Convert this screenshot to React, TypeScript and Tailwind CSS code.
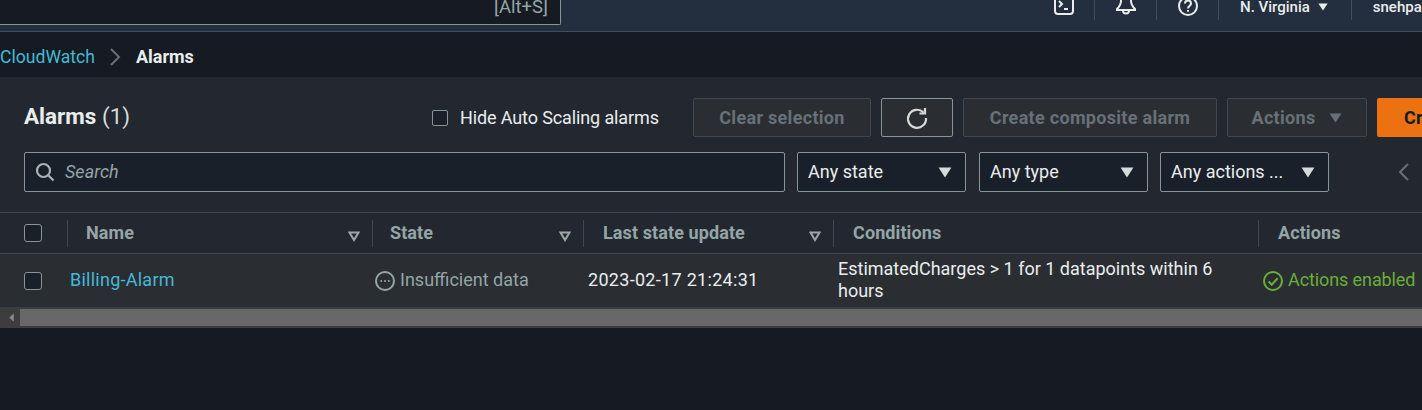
import React from "react";

const Caret = ({ className }: { className: string }) => (
  <svg viewBox="0 0 12 10" className={className} fill="currentColor" preserveAspectRatio="none">
    <path d="M0.5 0.5h11L6 9.500z" />
  </svg>
);

const SortIcon = () => (
  <svg viewBox="0 0 12 11" className="h-[11px] w-[12px] shrink-0 text-[#9ba7a6]" fill="none" stroke="currentColor" strokeWidth="2">
    <path d="M1.500 1.500h9L6 9z" />
  </svg>
);

const Checkbox = () => (
  <span className="block h-[18px] w-[18px] rounded-[3px] border border-[#879596] bg-[#1a2029]" />
);

const HeaderCell = ({ label, width, sort, inset }: { label: string; width: string; sort?: boolean; inset: string }) => (
  <div className={`${width} ${inset} flex h-[27px] shrink-0 items-center justify-between border-l border-[#414750] pr-[12px] tracking-[0.1px] whitespace-nowrap`}>
    <span>{label}</span>
    {sort && <span className="mt-[6px]"><SortIcon /></span>}
  </div>
);

const App = () => {
  return (
    <div className="h-[410px] w-[1422px] overflow-hidden bg-[#161a22] font-['Roboto',sans-serif] text-[18px] leading-[26px] text-[#d5dbdb]">
      <nav className="flex h-[32px] items-start overflow-hidden border-b border-[#414d5c] bg-[#232f3e] text-[15px] text-[#eaeded]">
        <div className="flex h-[25px] w-[561px] shrink-0 items-end justify-end rounded-br-[2px] border-r border-b border-[#879596] bg-[#161a22] pr-[12px] pb-[7px] text-[18.500px] leading-[20px] text-[#95a5a6]">
          [Alt+S]
        </div>
        <div className="ml-[493px] flex h-[20px] shrink-0 items-end">
          <svg viewBox="0 0 20 20" className="h-[20px] w-[20px] -translate-y-[5px]" fill="none" stroke="currentColor" strokeWidth="2">
            <rect x="1" y="-4" width="18" height="23" rx="3" />
            <path d="M5 6l3 3-3 3M10 14h4" />
          </svg>
          <span className="ml-[20px] h-[20px] border-l border-[#414d5c]" />
          <svg viewBox="0 0 20 20" className="ml-[21px] h-[20px] w-[20px] -translate-y-[3px]" fill="none" stroke="currentColor" strokeWidth="2">
            <path d="M5 -2v6c0 4-2 6-4 8v1h18v-1c-2-2-4-4-4-8v-6M7 13.500a3 3 0 0 0 6 0" />
          </svg>
          <span className="ml-[20px] h-[20px] border-l border-[#414d5c]" />
          <svg viewBox="0 0 20 20" className="ml-[21px] h-[20px] w-[20px] -translate-y-[4px]" fill="none" stroke="currentColor" strokeWidth="2">
            <circle cx="10" cy="10" r="9" />
            <path d="M7 7.500c0-4 6-4 6 0 0 2.500-3 2.500-3 5" />
            <path d="M10 14v1.800" />
          </svg>
          <span className="ml-[20px] h-[20px] border-l border-[#414d5c]" />
        </div>
        <div className="ml-[21px] flex h-[14px] shrink-0 items-center whitespace-nowrap leading-[14px] font-medium">
          <span>N. Virginia</span>
          <Caret className="ml-[8px] h-[8px] w-[10px] text-[#eaeded]" />
        </div>
        <span className="ml-[23px] h-[20px] shrink-0 border-l border-[#414d5c]" />
        <span className="ml-[21px] h-[14px] shrink-0 leading-[14px] font-medium">snehpa</span>
      </nav>

      <div className="flex h-[45px] items-center pt-[4px]">
        <span className="text-[17.600px] text-[#44b9d6]">CloudWatch</span>
        <svg viewBox="0 0 12 20" className="mr-[15px] ml-[14px] h-[20px] w-[12px] text-[#687078]" fill="none" stroke="currentColor" strokeWidth="2">
          <path d="M2 2l8 8-8 8" />
        </svg>
        <span className="font-bold text-[#eaeded]">Alarms</span>
      </div>

      <section className="h-[251px] border-t border-[#232830] bg-[#232830]">
        <div className="flex h-[134px] flex-col pt-[20px]">
          <div className="flex h-[39px] items-center pl-[24px]">
            <h1 className="mb-[3px] w-[408px] shrink-0 text-[22.500px] font-bold text-[#eaeded]">
              Alarms <span className="font-normal text-[#d5dbdb]">(1)</span>
            </h1>
            <label className="flex w-[261px] shrink-0 items-center gap-[12px] tracking-[-0.12px] whitespace-nowrap text-[#eaeded]">
              <span className="block h-[16px] w-[16px] rounded-[2px] border border-[#879596] bg-[#1a2029]" />
              Hide Auto Scaling alarms
            </label>
            <div className="flex h-[39px] shrink-0 gap-[10px] font-bold tracking-[0.3px] whitespace-nowrap text-[#687078]">
              <div className="flex w-[178px] items-center justify-center rounded-[2px] border border-[#414750] bg-[#2a2e33]">Clear selection</div>
              <div className="flex w-[72px] items-center justify-center rounded-[2px] border border-[#879596] bg-[#2a2e33] text-[#d5dbdb]">
                <svg viewBox="0 0 24 24" className="h-[24px] w-[24px]" fill="none" stroke="currentColor" strokeWidth="2.2">
                  <path d="M18.500 6.500A9 9 0 1 0 21 12" />
                  <path d="M20 2v5.500h-5.500" />
                </svg>
              </div>
              <div className="flex w-[254px] items-center justify-center rounded-[2px] border border-[#414750] bg-[#2a2e33]">Create composite alarm</div>
              <div className="flex w-[140px] items-center justify-center gap-[14px] rounded-[2px] border border-[#414750] bg-[#2a2e33]">
                Actions
                <Caret className="h-[10px] w-[13px] text-[#687078]" />
              </div>
              <div className="flex w-[140px] items-center rounded-[2px] bg-[#ec7211] pl-[27px] text-[#161a22]">Create alarm</div>
            </div>
          </div>
          <div className="mt-[15px] flex h-[40px] items-stretch pl-[24px]">
            <div className="flex w-[761px] shrink-0 items-center rounded-[2px] border border-[#879596] bg-[#1a2029] pl-[10px]">
              <svg viewBox="0 0 20 20" className="h-[20px] w-[20px] text-[#a9b4b5]" fill="none" stroke="currentColor" strokeWidth="2.2">
                <circle cx="8.500" cy="8.500" r="6.500" />
                <path d="M13.500 13.500l5 5" />
              </svg>
              <span className="ml-[10px] italic text-[#95a5a6]">Search</span>
            </div>
            <div className="ml-[12px] flex w-[169px] shrink-0 items-center justify-between rounded-[2px] border border-[#879596] bg-[#1a2029] pr-[13px] pl-[10px] text-[#eaeded]">
              <span>Any state</span>
              <Caret className="h-[11px] w-[14px] text-[#d5dbdb]" />
            </div>
            <div className="ml-[13px] flex w-[169px] shrink-0 items-center justify-between rounded-[2px] border border-[#879596] bg-[#1a2029] pr-[13px] pl-[10px] text-[#eaeded]">
              <span>Any type</span>
              <Caret className="h-[11px] w-[14px] text-[#d5dbdb]" />
            </div>
            <div className="ml-[12px] flex w-[169px] shrink-0 items-center justify-between rounded-[2px] border border-[#879596] bg-[#1a2029] pr-[13px] pl-[10px] whitespace-nowrap text-[#eaeded]">
              <span>Any actions ...</span>
              <Caret className="h-[11px] w-[14px] text-[#d5dbdb]" />
            </div>
            <svg viewBox="0 0 12 20" className="mt-[10px] ml-[69px] h-[20px] w-[12px] shrink-0 text-[#687078]" fill="none" stroke="currentColor" strokeWidth="2">
              <path d="M10 2l-8 8 8 8" />
            </svg>
          </div>
        </div>

        <div className="flex h-[42px] items-center border-y border-[#414750] font-bold text-[#95a5a6]">
          <div className="flex w-[67px] shrink-0 pl-[24px]"><Checkbox /></div>
          <HeaderCell label="Name" width="w-[305px]" inset="pl-[18px]" sort />
          <HeaderCell label="State" width="w-[211px]" inset="pl-[17px]" sort />
          <HeaderCell label="Last state update" width="w-[250px]" inset="pl-[19px]" sort />
          <HeaderCell label="Conditions" width="w-[425px]" inset="pl-[19px]" />
          <HeaderCell label="Actions" width="w-[164px]" inset="pl-[19px]" />
        </div>

        <div className="flex h-[53px] items-center bg-[#2a2e33]">
          <div className="w-[70px] shrink-0 pl-[24px]"><Checkbox /></div>
          <span className="mb-[2px] w-[305px] shrink-0 tracking-[0.25px] text-[#44b9d6]">Billing-Alarm</span>
          <div className="flex w-[213px] shrink-0 items-center gap-[5px] whitespace-nowrap text-[#95a5a6]">
            <svg viewBox="0 0 20 20" className="h-[20px] w-[20px]" fill="none" stroke="currentColor" strokeWidth="2">
              <circle cx="10" cy="10" r="9" />
              <path d="M5.500 10h1.500M9.300 10h1.500M13 10h1.500" />
            </svg>
            <span className="mb-[2px]">Insufficient data</span>
          </div>
          <span className="mb-[2px] w-[250px] shrink-0 tracking-[0.3px] whitespace-nowrap text-[#eaeded]">2023-02-17 21:24:31</span>
          <span className="mb-[2px] w-[425px] shrink-0 pr-[40px] leading-[22px] text-[#eaeded]">EstimatedCharges &gt; 1 for 1 datapoints within 6 hours</span>
          <div className="flex shrink-0 items-center gap-[5px] tracking-[-0.1px] whitespace-nowrap text-[#6aaf35]">
            <svg viewBox="0 0 20 20" className="h-[20px] w-[20px]" fill="none" stroke="currentColor" strokeWidth="2">
              <circle cx="10" cy="10" r="9" />
              <path d="M5.500 10.500l3.200 3.200 6-6.500" />
            </svg>
            <span className="mb-[2px]">Actions enabled</span>
          </div>
        </div>

        <div className="flex h-[21px] items-center bg-[#3d3d3d] pl-[7px]">
          <Caret className="h-[5px] w-[9px] rotate-90 text-[#8a8a8a]" />
          <div className="ml-[4px] h-[17px] flex-1 bg-[#686868]" />
        </div>
      </section>
    </div>
  );
};

export default App;
